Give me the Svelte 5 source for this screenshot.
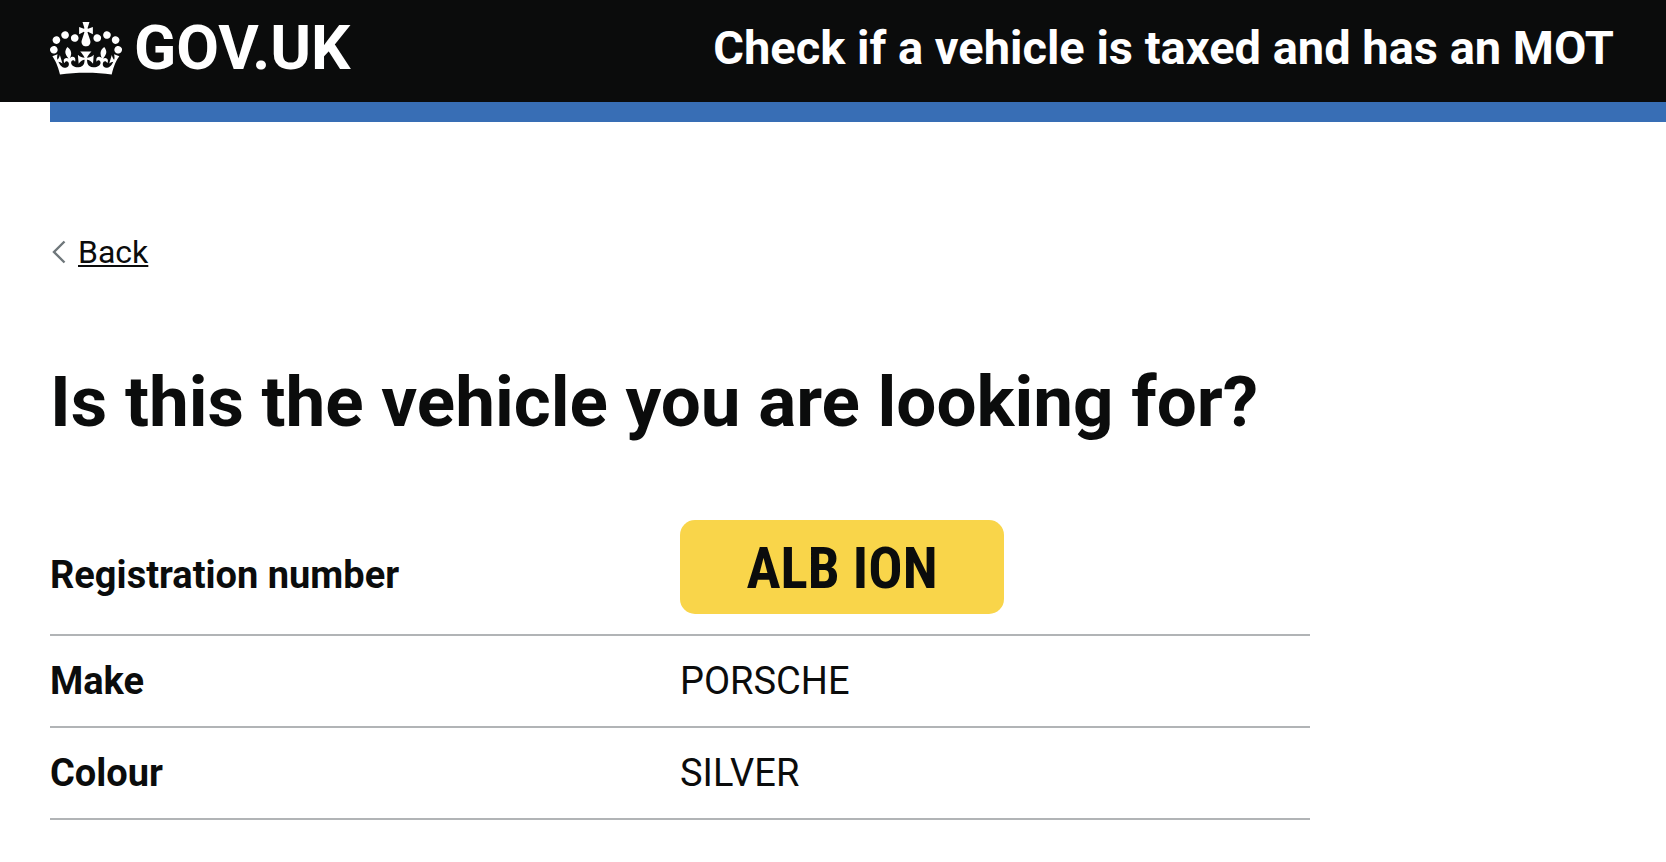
<script lang="ts">
  let serviceName: string = "Check if a vehicle is taxed and has an MOT";

  let details = [
    { label: "Registration number", value: "ALB ION", plate: true },
    { label: "Make", value: "PORSCHE", plate: false },
    { label: "Colour", value: "SILVER", plate: false }
  ];
</script>

<header>
  <a href="/" class="logo" aria-label="GOV.UK">
    <svg class="crown" viewBox="0 0 132 97" aria-hidden="true">
      <path
        fill="currentColor"
        fill-rule="evenodd"
        d="M25 30.2c3.5 1.5 7.7-.2 9.1-3.7 1.5-3.6-.2-7.8-3.9-9.2-3.6-1.4-7.6.3-9.1 3.9-1.4 3.5.3 7.5 3.9 9zM9 39.5c3.6 1.5 7.8-.2 9.2-3.7 1.5-3.6-.2-7.8-3.9-9.1-3.6-1.5-7.6.2-9.1 3.8-1.4 3.5.3 7.5 3.8 9zM4.4 57.2c3.5 1.5 7.7-.2 9.1-3.8 1.5-3.6-.2-7.7-3.9-9.1-3.5-1.5-7.6.3-9.1 3.8-1.4 3.5.3 7.6 3.9 9.1zm38.3-21.4c3.5 1.5 7.7-.2 9.1-3.8 1.5-3.6-.2-7.7-3.9-9.1-3.6-1.5-7.6.3-9.1 3.8-1.3 3.6.4 7.7 3.9 9.1zm64.4-5.6c-3.6 1.5-7.8-.2-9.1-3.7-1.5-3.6.2-7.8 3.8-9.2 3.6-1.4 7.7.3 9.2 3.9 1.3 3.5-.4 7.5-3.9 9zm15.9 9.3c-3.6 1.5-7.7-.2-9.1-3.7-1.5-3.6.2-7.8 3.7-9.1 3.6-1.5 7.7.2 9.2 3.8 1.5 3.5-.3 7.5-3.8 9zm4.7 17.7c-3.6 1.5-7.8-.2-9.2-3.8-1.5-3.6.2-7.7 3.9-9.1 3.6-1.5 7.7.3 9.2 3.8 1.3 3.5-.4 7.6-3.9 9.1zM89.3 35.8c-3.6 1.5-7.8-.2-9.2-3.8-1.4-3.6.2-7.7 3.9-9.1 3.6-1.5 7.7.3 9.2 3.8 1.4 3.6-.3 7.7-3.9 9.1zM69.7 17.7l8.9 4.7V9.3l-8.9 2.8c-.2-.3-.5-.6-.9-.9L72.4 0H59.6l3.5 11.2c-.3.3-.6.5-.9.9l-8.8-2.8v13.1l8.8-4.7c.3.3.6.7.9.9l-5 15.4v.1c-.2.8-.4 1.6-.4 2.4 0 4.1 3.1 7.5 7 8.1h.2c.3 0 .7.1 1 .1.4 0 .7 0 1-.1h.2c4-.6 7.1-4.1 7.1-8.1 0-.8-.1-1.7-.4-2.4V34l-5.1-15.4c.4-.2.7-.6 1-.9zM66 92.8c16.9 0 32.8 1.1 47.1 3.2 4-16.9 8.9-26.7 14-33.5l-9.6-3.4c1 4.9 1.1 7.2 0 10.2-1.5-1.4-3-4.3-4.2-8.7L108.6 76c2.8-2 5-3.2 7.5-3.3-4.4 9.4-10 11.9-13.6 11.2-4.3-.8-6.3-4.6-5.6-7.9 1-4.7 5.7-5.9 8-.5 4.3-8.7-3-11.4-7.6-8.8 7.1-7.2 7.9-13.5 2.1-21.1-8 6.1-8.1 12.3-4.5 20.8-4.7-5.4-12.1-2.5-9.5 6.2 3.4-5.2 7.9-2 7.2 3.1-.6 4.3-6.4 7.8-13.5 7.2-10.3-.9-10.9-8-11.2-13.8 2.5-.5 7.1 1.8 11 7.3L80.2 60c-4.1 4.4-8 5.3-12.3 5.4 1.4-4.4 8-11.6 8-11.6H55.5s6.4 7.2 7.9 11.6c-4.2-.1-8-1-12.3-5.4l1.4 16.4c3.9-5.5 8.5-7.7 10.9-7.3-.3 5.8-.9 12.8-11.1 13.8-7.2.6-12.9-2.9-13.5-7.2-.7-5 3.8-8.3 7.1-3.1 2.7-8.7-4.6-11.6-9.4-6.2 3.7-8.5 3.6-14.7-4.6-20.8-5.8 7.6-5 13.9 2.2 21.1-4.7-2.6-11.9.1-7.7 8.8 2.3-5.5 7.1-4.2 8.1.5.7 3.3-1.3 7.1-5.7 7.9-3.5.7-9-1.8-13.5-11.2 2.5.1 4.7 1.3 7.5 3.3l-4.7-15.4c-1.2 4.4-2.7 7.2-4.3 8.7-1.1-3-.9-5.3 0-10.2l-9.5 3.4c5 6.9 9.9 16.7 14 33.5 14.8-2.1 30.8-3.2 47.7-3.2z"
      />
    </svg>
    <span>GOV.UK</span>
  </a>
  <a href="/" class="service">{serviceName}</a>
</header>
<div class="bar"></div>

<main>
  <a href="/" class="back">
    <svg class="chevron" viewBox="0 0 14 24" aria-hidden="true">
      <path d="M12.500 1.500 2 12l10.500 10.500" fill="none" stroke="#6f777b" stroke-width="2.400" />
    </svg>
    <span>Back</span>
  </a>

  <h1>Is this the vehicle you are looking for?</h1>

  <dl>
    {#each details as detail}
      <div class="row">
        <dt>{detail.label}</dt>
        <dd>
          {#if detail.plate}
            <span class="plate">{detail.value}</span>
          {:else}
            {detail.value}
          {/if}
        </dd>
      </div>
    {/each}
  </dl>
</main>

<style>
  :global(body) {
    margin: 0;
    background: #fff;
    color: #0b0c0c;
    font-family: Roboto, "Liberation Sans", sans-serif;
  }

  header {
    display: flex;
    justify-content: space-between;
    align-items: center;
    padding: 13px 52px 19px 50px;
    background: #0b0c0c;
    color: #fff;
    font-weight: 700;
  }

  header a {
    color: inherit;
    text-decoration: none;
  }

  .logo {
    display: flex;
    align-items: center;
    gap: 12px;
    font-size: 62px;
    line-height: 70px;
  }

  .crown {
    width: 72px;
    height: 53px;
  }

  .service {
    font-size: 47px;
    line-height: 60px;
  }

  .bar {
    height: 20px;
    margin-left: 50px;
    background: #386eb5;
  }

  main {
    padding: 0 50px;
  }

  .back {
    display: inline-flex;
    align-items: center;
    gap: 12px;
    margin-top: 110px;
    padding-left: 2px;
    color: inherit;
    font-size: 32px;
    line-height: 40px;
    text-decoration: none;
  }

  .back span {
    text-decoration: underline;
    text-decoration-thickness: 2px;
    text-underline-offset: 2px;
  }

  .chevron {
    width: 14px;
    height: 24px;
  }

  h1 {
    margin: 90px 0 58px;
    font-size: 71px;
    font-weight: 700;
    line-height: 80px;
  }

  dl {
    max-width: 1260px;
    margin: 0;
    font-size: 38px;
    line-height: 50px;
  }

  .row {
    display: grid;
    grid-template-columns: 1fr 1fr;
    align-items: baseline;
    padding: 20px 0;
    border-bottom: 2px solid #b1b4b6;
  }

  dt {
    font-weight: 700;
  }

  dd {
    margin: 0;
  }

  .plate {
    display: block;
    box-sizing: border-box;
    width: 324px;
    padding: 19px 16px 15px;
    border-radius: 15px;
    background: #f9d54a;
    font-family: "Roboto Condensed", Roboto, sans-serif;
    font-size: 57px;
    font-weight: 700;
    line-height: 60px;
    text-align: center;
  }
</style>
